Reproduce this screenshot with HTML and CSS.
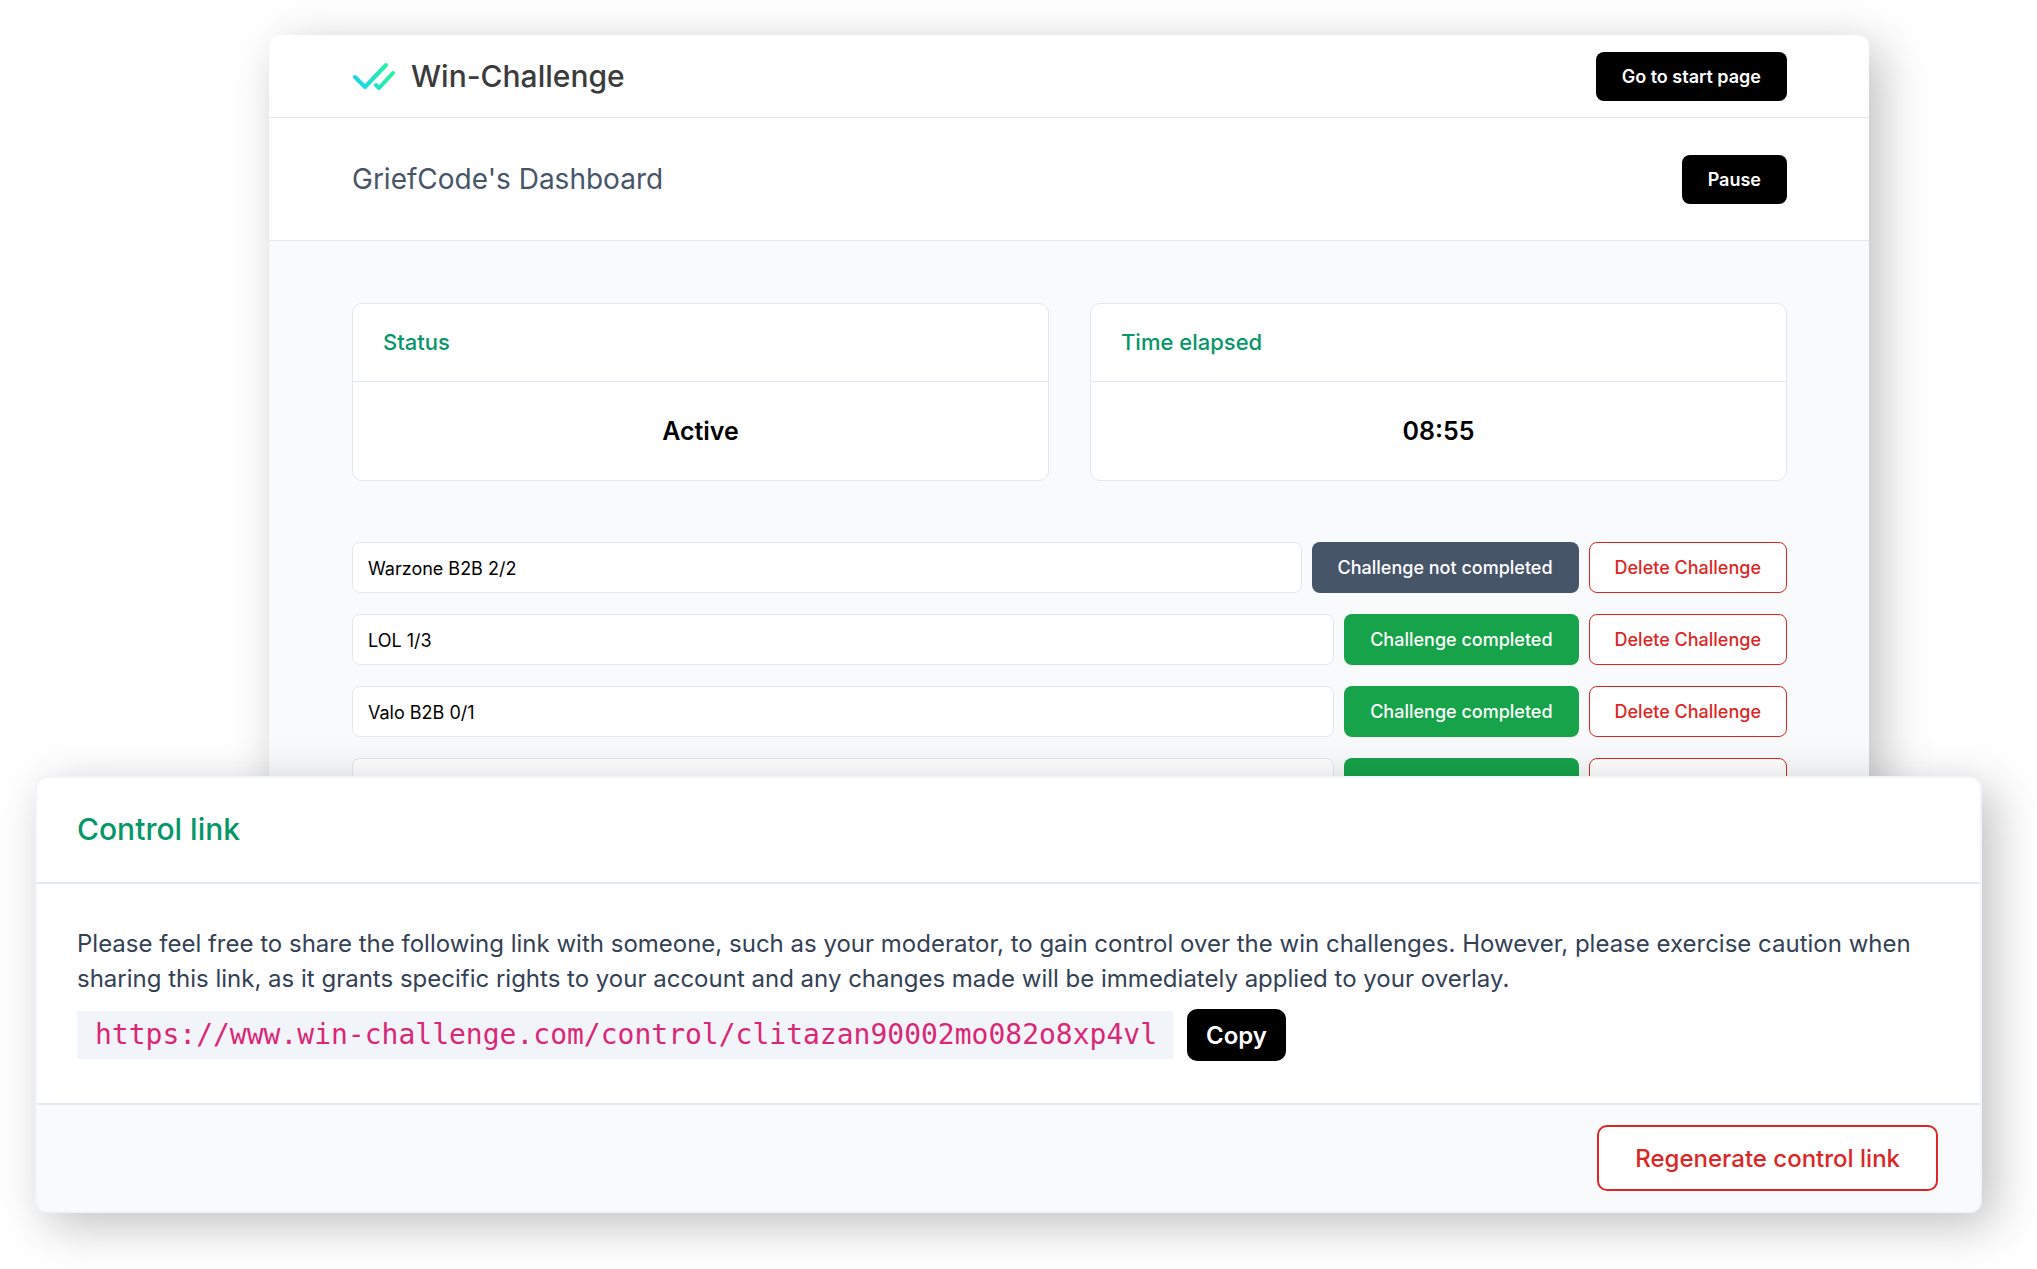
FILE: index.html
```
<!doctype html>
<html lang="en">
<head>
    <meta charset="utf-8">
    <meta name="viewport" content="width=device-width, initial-scale=1">
    <title>Win-Challenge - Dashboard</title>

    <link rel="stylesheet" href="styles.css">
</head>

<body>
<!-- Dashboard -->
<main class="dashboard">
    <header class="topbar">
        <a href="#" class="brand">
            <svg class="brand-icon" viewBox="0 0 43 28" aria-hidden="true">
                <defs>
                    <linearGradient id="brandGradient" gradientUnits="userSpaceOnUse" x1="0" y1="20" x2="42" y2="6">
                        <stop offset="0" stop-color="#18d3f5"/>
                        <stop offset="1" stop-color="#25f795"/>
                    </linearGradient>
                </defs>
                <g fill="none" stroke="url(#brandGradient)" stroke-width="4" stroke-linecap="round" stroke-linejoin="round">
                    <path d="M3 15 13 25 34 3"/>
                    <path d="M24 23 27 26 41 11"/>
                </g>
            </svg>
            <span class="brand-name">Win-Challenge</span>
        </a>
        <button type="button" class="btn btn-dark">Go to start page</button>
    </header>

    <div class="page-title">
        <h1>GriefCode's Dashboard</h1>
        <button type="button" class="btn btn-dark">Pause</button>
    </div>

    <div class="content">
        <div class="stats">
            <section class="stat">
                <h2 class="stat-title">Status</h2>
                <p class="stat-value">Active</p>
            </section>
            <section class="stat">
                <h2 class="stat-title">Time elapsed</h2>
                <p class="stat-value">08:55</p>
            </section>
        </div>

        <!-- Challenges -->
        <div class="challenges">
            <div class="challenge">
                <input type="text" class="challenge-name" value="Warzone B2B 2/2" aria-label="Challenge 1">
                <button type="button" class="btn btn-open">Challenge not completed</button>
                <button type="button" class="btn btn-danger">Delete Challenge</button>
            </div>
            <div class="challenge">
                <input type="text" class="challenge-name" value="LOL 1/3" aria-label="Challenge 2">
                <button type="button" class="btn btn-done">Challenge completed</button>
                <button type="button" class="btn btn-danger">Delete Challenge</button>
            </div>
            <div class="challenge">
                <input type="text" class="challenge-name" value="Valo B2B 0/1" aria-label="Challenge 3">
                <button type="button" class="btn btn-done">Challenge completed</button>
                <button type="button" class="btn btn-danger">Delete Challenge</button>
            </div>
            <div class="challenge">
                <input type="text" class="challenge-name" aria-label="Challenge 4">
                <button type="button" class="btn btn-done">Challenge completed</button>
                <button type="button" class="btn btn-danger">Delete Challenge</button>
            </div>
        </div>
    </div>
</main>

<!-- Control link -->
<section class="control">
    <h2 class="control-title">Control link</h2>
    <div class="control-body">
        <p>Please feel free to share the following link with someone, such as your moderator, to gain control over the win challenges. However, please exercise caution when sharing this link, as it grants specific rights to your account and any changes made will be immediately applied to your overlay.</p>
        <div class="control-link">
            <code>https://www.win-challenge.com/control/clitazan90002mo082o8xp4vl</code>
            <button type="button" class="btn-copy">Copy</button>
        </div>
    </div>
    <div class="control-footer">
        <button type="button" class="btn-regenerate">Regenerate control link</button>
    </div>
</section>
</body>
</html>
```

FILE: styles.css
```
:root {
    --green: #059669;
    --success: #16a34a;
    --danger: #dc2626;
    --slate: #475569;
    --border: #e2e8f0;
    --surface: #f8fafc;
    --shadow: 12px 12px 48px rgba(0, 0, 0, 0.25);
}

* {
    box-sizing: border-box;
}

body {
    margin: 0;
    padding: 35px 55px 55px 35px;
    background-color: #fff;
    color: #000;
    font-family: Inter, "Liberation Sans", sans-serif;
}

h1, h2, p {
    margin: 0;
}

/* Dashboard */
.dashboard {
    margin: 0 113px 0 234px;
    border-radius: 12px;
    background-color: var(--surface);
    box-shadow: var(--shadow);
    overflow: hidden;
}

.topbar,
.page-title {
    display: flex;
    align-items: center;
    justify-content: space-between;
    padding: 0 82px 0 83px;
    background-color: #fff;
    border-bottom: 1px solid #e5e7eb;
}

.topbar {
    height: 83px;
}

.page-title {
    height: 123px;
}

.page-title h1 {
    color: var(--slate);
    font-size: 28px;
    font-weight: 400;
}

.brand {
    display: flex;
    align-items: center;
    gap: 16px;
    color: #3b3b3b;
    text-decoration: none;
}

.brand-icon {
    width: 43px;
    height: 28px;
}

.brand-name {
    font-size: 30px;
    font-weight: 500;
}

.content {
    padding: 62px 82px 40px 83px;
}

/* Buttons */
.btn {
    height: 51px;
    padding: 0 25px;
    border: 1px solid transparent;
    border-radius: 8px;
    color: #fff;
    font-family: inherit;
    font-size: 18px;
    font-weight: 500;
    white-space: nowrap;
}

.btn-dark {
    height: 49px;
    background-color: #000;
    font-weight: 600;
}

.btn-open {
    background-color: var(--slate);
}

.btn-done {
    background-color: var(--success);
}

.btn-danger {
    border-color: var(--danger);
    background-color: #fff;
    color: var(--danger);
}

/* Status cards */
.stats {
    display: grid;
    grid-template-columns: 1fr 1fr;
    gap: 41px;
}

.stat {
    border: 1px solid var(--border);
    border-radius: 10px;
    background-color: #fff;
}

.stat-title {
    padding: 24px 30px;
    border-bottom: 1px solid var(--border);
    color: var(--green);
    font-size: 22px;
    font-weight: 500;
    line-height: 29px;
}

.stat-value {
    padding: 32px 30px;
    font-size: 25px;
    font-weight: 600;
    line-height: 34px;
    text-align: center;
}

/* Challenges */
.challenges {
    display: flex;
    flex-direction: column;
    gap: 21px;
    margin-top: 61px;
}

.challenge {
    display: flex;
    gap: 10px;
}

.challenge-name {
    flex: 1;
    min-width: 0;
    height: 51px;
    padding: 2px 15px 0;
    border: 1px solid #e5e7eb;
    border-radius: 8px;
    background-color: #fff;
    color: #000;
    font-family: inherit;
    font-size: 18px;
}

/* Control link */
.control {
    position: relative;
    margin-top: -73px;
    border: 2px solid #f1f5f9;
    border-radius: 12px;
    background-color: #fff;
    box-shadow: var(--shadow);
    overflow: hidden;
}

.control-title {
    padding: 31px 40px 33px;
    border-bottom: 2px solid var(--border);
    color: var(--green);
    font-size: 30px;
    font-weight: 500;
    line-height: 40px;
}

.control-body {
    padding: 42px 40px;
    color: #334155;
    font-size: 24px;
    line-height: 35px;
}

.control-link {
    display: flex;
    align-items: center;
    gap: 14px;
    margin-top: 13px;
}

.control-link code {
    padding: 0 16px 0 18px;
    background-color: #f1f5f9;
    color: #db2777;
    font-family: "DejaVu Sans Mono", monospace;
    font-size: 28px;
    line-height: 48px;
}

.btn-copy {
    height: 52px;
    padding: 0 19px;
    border: 0;
    border-radius: 10px;
    background-color: #000;
    color: #fff;
    font-family: inherit;
    font-size: 24px;
    font-weight: 600;
}

.control-footer {
    display: flex;
    justify-content: flex-end;
    padding: 20px 42px;
    border-top: 2px solid var(--border);
    background-color: var(--surface);
}

.btn-regenerate {
    height: 66px;
    padding: 0 36px;
    border: 2px solid var(--danger);
    border-radius: 10px;
    background-color: #fff;
    color: var(--danger);
    font-family: inherit;
    font-size: 24px;
    font-weight: 500;
}
```
